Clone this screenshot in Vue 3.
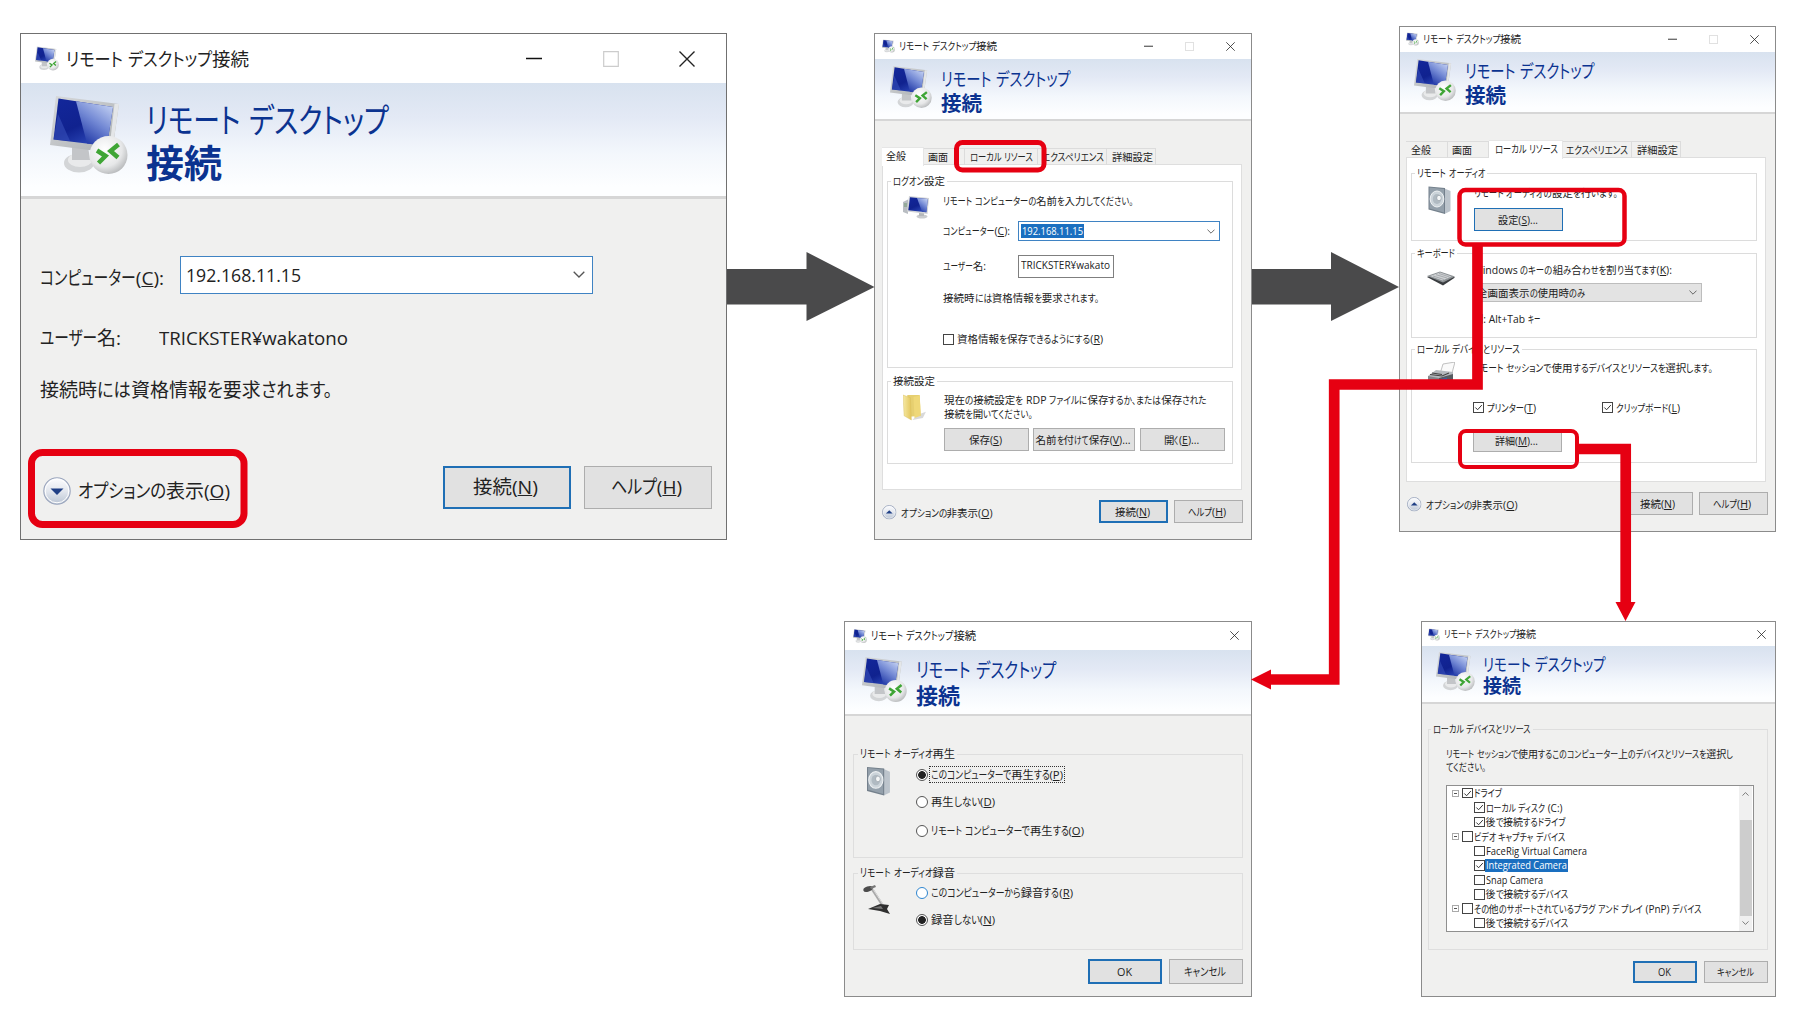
<script setup>
import { h, onMounted, ref } from 'vue'

// Label squeezed to a fixed width: kana runs are narrowed first, as in a UI font with condensed kana.
// An underscore marks the access key that follows it.
const Fit = {
  props: { t: String, w: Number },
  setup(props) {
    const root = ref(null)
    onMounted(() => {
      const runs = [...root.value.children].map((run) => ({
        run,
        inner: run.firstElementChild,
        kana: run.classList.contains('kana'),
        width: run.firstElementChild.getBoundingClientRect().width
      }))
      const kana = runs.filter((r) => r.kana).reduce((a, r) => a + r.width, 0)
      const rest = runs.filter((r) => !r.kana).reduce((a, r) => a + r.width, 0)
      let k = kana ? (props.w - rest) / kana : 1
      let o = 1
      if (!kana || k < 0.62 || k > 1.12) {
        k = Math.min(1.12, Math.max(0.62, k))
        o = props.w / (kana * k + rest)
        k *= o
      }
      runs.forEach((r) => {
        const s = r.kana ? k : o
        r.run.style.width = r.width * s + 'px'
        r.inner.style.transform = `scaleX(${s})`
      })
    })
    return () => {
      const parts = props.t.match(/[\u3001\u3002\u3041-\u30ff]+|[^\u3001\u3002\u3041-\u30ff]+/g) || []
      return h('span', { class: 'fit', ref: root, style: { width: props.w + 'px' } },
        parts.map((p) => {
          const isKana = /[\u3001\u3002\u3041-\u30ff]/.test(p)
          const i = p.indexOf('_')
          const kids = i < 0 ? p : [p.slice(0, i), h('u', p[i + 1]), p.slice(i + 2)]
          return h('span', { class: ['run', { kana: isKana }] }, [h('span', { class: 'glyphs' }, kids)])
        }))
    }
  }
}

const wins = [
  { id: 'main', title: 183, head: 243, sub: 76, full: true },
  { id: 'general', title: 98, head: 130, sub: 41, full: true, tall: true },
  { id: 'local', title: 98, head: 130, sub: 41, full: true, tall: true },
  { id: 'audio', title: 105, head: 140, sub: 44 },
  { id: 'devices', title: 92, head: 123, sub: 38 }
]

const tabs = [
  { t: '全般', w: 20 },
  { t: '画面', w: 20 },
  { t: 'ローカル リソース', w: 63 },
  { t: 'エクスペリエンス', w: 62 },
  { t: '詳細設定', w: 41 }
]

const tree = [
  { t: 'ドライブ', w: 28, on: true },
  { t: 'ローカル ディスク (C:)', w: 77, on: true, sub: true },
  { t: '後で接続するドライブ', w: 80, on: true, sub: true },
  { t: 'ビデオ キャプチャ デバイス', w: 92 },
  { t: 'FaceRig Virtual Camera', w: 101, sub: true },
  { t: 'Integrated Camera', w: 81, on: true, sub: true, sel: true },
  { t: 'Snap Camera', w: 57, sub: true },
  { t: '後で接続するデバイス', w: 83, sub: true },
  { t: 'その他のサポートされているプラグ アンド プレイ (PnP) デバイス', w: 228 },
  { t: '後で接続するデバイス', w: 83, sub: true }
]
</script>

<template>
  <main class="canvas">
    <svg class="defs" width="0" height="0">
      <defs>
        <linearGradient id="gScreen" x1="0" y1="0" x2="0.6" y2="1">
          <stop offset="0" stop-color="#13279b" /><stop offset="0.6" stop-color="#10228f" /><stop offset="1" stop-color="#2c48b8" />
        </linearGradient>
        <linearGradient id="gShine" x1="0.9" y1="0" x2="0.3" y2="1">
          <stop offset="0" stop-color="#c9d6f5" /><stop offset="0.5" stop-color="#7288d4" /><stop offset="1" stop-color="#1c34a4" />
        </linearGradient>
        <linearGradient id="gFrame" x1="0" y1="0" x2="1" y2="1">
          <stop offset="0" stop-color="#d8dadc" /><stop offset="1" stop-color="#a9adb0" />
        </linearGradient>
        <radialGradient id="gBall" cx="0.4" cy="0.35" r="0.7">
          <stop offset="0" stop-color="#fff" /><stop offset="0.65" stop-color="#e6e7e8" /><stop offset="1" stop-color="#b4b6b8" />
        </radialGradient>
        <linearGradient id="gDisc" x1="0" y1="0" x2="0" y2="1">
          <stop offset="0" stop-color="#fdfdff" /><stop offset="0.5" stop-color="#e3e7ee" /><stop offset="1" stop-color="#b9c4d3" />
        </linearGradient>
        <linearGradient id="gFolder" x1="0" y1="0" x2="1" y2="0">
          <stop offset="0" stop-color="#f6e9a4" /><stop offset="1" stop-color="#e3c65c" />
        </linearGradient>
      </defs>
      <symbol id="rdp" viewBox="0 0 78 78">
        <ellipse cx="29" cy="67" rx="15" ry="9.5" fill="#d3d5d7" />
        <ellipse cx="30" cy="64" rx="12" ry="7" fill="#e9eaeb" />
        <path d="M22 50h16l2 14H22z" fill="#c3c5c8" />
        <path d="M6 0 69 8 62 57 0 49z" fill="url(#gFrame)" />
        <path d="M64.500 8 69 8 62 57 59 56z" fill="#e4e6e8" />
        <path d="M8.500 2.500 63 11 57 50 3.500 43.500z" fill="url(#gScreen)" />
        <path d="M26 5.300 63 11 57 50 37 47.600z" fill="url(#gShine)" />
        <path d="M8 18 20 45 3.500 43.500z" fill="#3a54bd" opacity="0.55" />
        <circle cx="58.500" cy="59" r="19" fill="url(#gBall)" />
        <path d="M47 54.500 55.500 60 48.500 67M68.500 48.500 60.500 55 68 61.500" fill="none" stroke="#3fa535" stroke-width="4.500" />
      </symbol>
      <symbol id="pc" viewBox="0 0 26 23">
        <path d="M0 6 5 3.500V18L0 16z" fill="#b9bdc2" /><path d="M1 8h3M1 10h3" stroke="#5d8f5d" stroke-width="0.800" />
        <ellipse cx="19" cy="20.500" rx="5.500" ry="2" fill="#c9cbce" /><path d="M16 16h5v4h-5z" fill="#b5b8bb" />
        <path d="M6 0 26 2 24.500 18 4 15.500z" fill="#d2d4d6" />
        <path d="M7 1.200 24.800 3 23.400 16.300 5.300 14.300z" fill="url(#gScreen)" />
        <path d="M14 2 24.800 3 23.400 16.300 19 15.800z" fill="url(#gShine)" />
      </symbol>
      <symbol id="speaker" viewBox="0 0 24 28">
        <path d="M15 2 22 5V25L16 28z" fill="#bcc4cc" />
        <path d="M0 0.500 16.500 2V28L0 23.500z" fill="#74808c" />
        <path d="M1 1.500 15.500 3V26.500L1 22.500z" fill="#94a0ab" />
        <ellipse cx="8.500" cy="13" rx="6.800" ry="8" fill="#ccd4da" stroke="#eef1f3" />
        <ellipse cx="8.500" cy="13" rx="4.200" ry="5" fill="#b0bac2" /><ellipse cx="10.500" cy="12" rx="2.300" ry="2.700" fill="#f4f6f7" stroke="#7b858e" stroke-width="0.500" />
      </symbol>
      <symbol id="keyboard" viewBox="0 0 28 15">
        <path d="M0 6 13 1 28 6.500 16 14.500z" fill="#3a3d40" /><path d="M0 5 13 0.500 28 5.500 16 11.500z" fill="#8f9497" />
        <path d="M3 5 13 1.500 24.500 5.500 15.500 9.500z" fill="#cfd2d4" /><path d="M6 5 17 8.500M9 3.700 20 7M12 2.500 22.500 6" stroke="#8b8f93" stroke-width="0.600" />
      </symbol>
      <symbol id="printer" viewBox="0 0 28 26">
        <path d="M16 2 28 0 25 11 13 12z" fill="#fafafa" stroke="#999" stroke-width="0.600" />
        <path d="M1 14 9 8 26 10V21L12 24 1 20z" fill="#b5babe" /><path d="M1 14 12 16V24L1 20z" fill="#82878c" />
        <path d="M12 16 26 12V21L12 24z" fill="#565b61" /><path d="M14 17 20 15.500V18L14 19.500z" fill="#3f5f9e" /><path d="M3 12.500 15 14 22 11M5 11 15 12.500" stroke="#444" stroke-width="1.100" fill="none" />
      </symbol>
      <symbol id="folder" viewBox="0 0 22 26">
        <path d="M14 20 22 17 19 23 9 25z" fill="#c9c9c9" opacity="0.7" />
        <path d="M4 1 16 1 17 21 6 22z" fill="#e6cf70" /><path d="M10 3 16 1.500 17 21 11 23z" fill="#efd878" />
        <path d="M0 1 7 3.500 8 25 1 21z" fill="url(#gFolder)" stroke="#d6bb58" stroke-width="0.400" />
      </symbol>
      <symbol id="mic" viewBox="0 0 28 29">
        <path d="M9 4 20 21" stroke="#a9a9a9" stroke-width="2.400" /><path d="M10 4 21 21" stroke="#dcdcdc" stroke-width="1" />
        <ellipse cx="5" cy="4" rx="4.800" ry="2.600" fill="#4c4c4c" transform="rotate(-20 5 4)" /><path d="M7 2 12 0 13 2 8 4z" fill="#777" />
        <path d="M5 24 17 19 26 20 24 24 27 29 17 26z" fill="#2f2f2f" /><path d="M9 23 18 21 20 24z" fill="#777" />
      </symbol>
      <symbol id="down" viewBox="0 0 28 28">
        <circle cx="14" cy="14" r="13.200" fill="url(#gDisc)" stroke="#9aa5bd" stroke-width="1.100" /><circle cx="14" cy="14" r="11.800" fill="none" stroke="#fff" />
        <path d="M7.500 11.500h13L14 18z" fill="#1f3f85" />
      </symbol>
      <symbol id="up" viewBox="0 0 28 28">
        <circle cx="14" cy="14" r="13" fill="url(#gDisc)" stroke="#8f9bb5" stroke-width="1.600" /><circle cx="14" cy="14" r="11.500" fill="none" stroke="#fff" />
        <path d="M7.500 16.500h13L14 10z" fill="#1f3f85" />
      </symbol>
      <symbol id="chev" viewBox="0 0 12 7"><path d="M0.700 0.700 6 6 11.300 0.700" fill="none" stroke="#555" stroke-width="1.300" /></symbol>
      <symbol id="tick" viewBox="0 0 10 10"><path d="M1.500 5 4 7.500 8.700 2.300" fill="none" stroke="#333" stroke-width="1.100" /></symbol>
    </svg>

    <section v-for="win in wins" :key="win.id" class="win" :class="[win.id, { tall: win.tall }]">
      <header class="bar">
        <svg class="bar-icon"><use href="#rdp" /></svg>
        <Fit t="リモート デスクトップ接続" :w="win.title" />
        <div class="caption">
          <svg v-if="win.full" viewBox="0 0 16 16"><path d="M0 7.500h16" stroke="#111" stroke-width="1.500" /></svg>
          <svg v-if="win.full" viewBox="0 0 16 16"><path d="M.7.700h14.600v14.600H.7z" fill="none" stroke="#ccc" stroke-width="1.200" /></svg>
          <svg viewBox="0 0 16 16"><path d="M.5.500l15 15M15.500.500l-15 15" fill="none" stroke="#222" stroke-width="1.400" /></svg>
        </div>
      </header>
      <div class="banner">
        <svg class="logo"><use href="#rdp" /></svg>
        <div class="heading">
          <div class="h1"><Fit t="リモート デスクトップ" :w="win.head" /></div>
          <div class="h2"><Fit t="接続" :w="win.sub" /></div>
        </div>
      </div>

      <template v-if="win.id === 'main'">
        <div class="row m-host">
          <Fit t="コンピューター(_C):" :w="124" />
          <div class="combo"><Fit t="192.168.11.15" :w="115" /><svg class="chev"><use href="#chev" /></svg></div>
        </div>
        <div class="row m-user"><Fit t="ユーザー名:" :w="81" /><Fit t="TRICKSTER¥wakatono" :w="189" /></div>
        <div class="row m-note"><Fit t="接続時には資格情報を要求されます。" :w="292" /></div>
        <footer class="foot">
          <svg class="disc"><use href="#down" /></svg><Fit class="opt" t="オプションの表示(_O)" :w="152" />
          <div class="btn primary"><Fit t="接続(_N)" :w="65" /></div>
          <div class="btn"><Fit t="ヘルプ(_H)" :w="71" /></div>
        </footer>
      </template>

      <template v-if="win.tall">
        <nav class="tabs">
          <div v-for="(tab, i) in tabs" :key="tab.t" class="tab" :class="['t' + i, { active: i === (win.id === 'general' ? 0 : 2) }]">
            <Fit :t="tab.t" :w="tab.w" />
          </div>
        </nav>
        <div v-if="win.id === 'general'" class="panel">
          <div class="group g-logon">
            <div class="legend"><Fit t="ログオン設定" :w="52" /></div>
            <div class="cols">
              <svg class="pic pc"><use href="#pc" /></svg>
              <div class="content">
                <div class="row r26"><Fit t="リモート コンピューターの名前を入力してください。" :w="190" /></div>
                <div class="row r34"><Fit class="lab" t="コンピューター(_C):" :w="67" />
                  <div class="combo"><span class="marked"><Fit t="192.168.11.15" :w="61" /></span><svg class="chev"><use href="#chev" /></svg></div>
                </div>
                <div class="row r36"><Fit class="lab" t="ユーザー名:" :w="43" /><div class="userbox"><Fit t="TRICKSTER¥wakato" :w="89" /></div></div>
                <div class="row r28"><Fit t="接続時には資格情報を要求されます。" :w="156" /></div>
                <div class="row r54"><span class="check"></span><Fit t="資格情報を保存できるようにする(_R)" :w="146" /></div>
              </div>
            </div>
          </div>
          <div class="group g-conn">
            <div class="legend"><Fit t="接続設定" :w="42" /></div>
            <div class="cols">
              <svg class="pic folder"><use href="#folder" /></svg>
              <div class="content">
                <div class="row r14 first"><Fit t="現在の接続設定を RDP ファイルに保存するか、または保存された" :w="263" /></div>
                <div class="row r14"><Fit t="接続を開いてください。" :w="89" /></div>
                <div class="row btns">
                  <div class="btn b1"><Fit t="保存(_S)" :w="33" /></div>
                  <div class="btn b2"><Fit t="名前を付けて保存(_V)..." :w="95" /></div>
                  <div class="btn b3"><Fit t="開く(_E)..." :w="35" /></div>
                </div>
              </div>
            </div>
          </div>
        </div>
        <div v-else class="panel">
          <div class="group g-audio">
            <div class="legend"><Fit t="リモート オーディオ" :w="68" /></div>
            <div class="cols">
              <svg class="pic speaker"><use href="#speaker" /></svg>
              <div class="content">
                <div class="row r26"><Fit t="リモート オーディオの設定を行います。" :w="144" /></div>
                <div class="btn focus set"><Fit t="設定(_S)..." :w="40" /></div>
              </div>
            </div>
          </div>
          <div class="group g-keys">
            <div class="legend"><Fit t="キーボード" :w="38" /></div>
            <div class="cols">
              <svg class="pic keyboard"><use href="#keyboard" /></svg>
              <div class="content">
                <div class="row k1"><Fit t="Windows のキーの組み合わせを割り当てます(_K):" :w="199" /></div>
                <div class="select"><Fit t="全画面表示の使用時のみ" :w="108" /><svg class="chev"><use href="#chev" /></svg></div>
                <div class="row k3"><Fit t="例: Alt+Tab キー" :w="67" /></div>
              </div>
            </div>
          </div>
          <div class="group g-dev">
            <div class="legend"><Fit t="ローカル デバイスとリソース" :w="103" /></div>
            <div class="cols">
              <svg class="pic printer"><use href="#printer" /></svg>
              <div class="content">
                <div class="row d1"><Fit t="リモート セッションで使用するデバイスとリソースを選択します。" :w="240" /></div>
                <div class="row d2">
                  <span class="check"><svg><use href="#tick" /></svg></span><Fit t="プリンター(_T)" :w="49" />
                  <span class="check second"><svg><use href="#tick" /></svg></span><Fit t="クリップボード(_L)" :w="64" />
                </div>
                <div class="btn more"><Fit t="詳細(_M)..." :w="43" /></div>
              </div>
            </div>
          </div>
        </div>
        <footer class="foot">
          <svg class="disc"><use href="#up" /></svg><Fit class="opt" t="オプションの非表示(_O)" :w="92" />
          <div class="btn" :class="{ primary: win.id === 'general' }"><Fit t="接続(_N)" :w="35" /></div>
          <div class="btn"><Fit t="ヘルプ(_H)" :w="38" /></div>
        </footer>
      </template>

      <template v-if="win.id === 'audio'">
        <div class="group g-play">
          <div class="legend"><Fit t="リモート オーディオ再生" :w="95" /></div>
          <div class="cols">
            <svg class="pic speaker"><use href="#speaker" /></svg>
            <div class="content">
              <div class="row p1"><span class="radio on"></span><span class="dotted"><Fit t="このコンピューターで再生する(_P)" :w="132" /></span></div>
              <div class="row p2"><span class="radio"></span><Fit t="再生しない(_D)" :w="64" /></div>
              <div class="row p2"><span class="radio"></span><Fit t="リモート コンピューターで再生する(_O)" :w="153" /></div>
            </div>
          </div>
        </div>
        <div class="group g-rec">
          <div class="legend"><Fit t="リモート オーディオ録音" :w="95" /></div>
          <div class="cols">
            <svg class="pic mic"><use href="#mic" /></svg>
            <div class="content">
              <div class="row q1"><span class="radio hot"></span><Fit t="このコンピューターから録音する(_R)" :w="142" /></div>
              <div class="row p2"><span class="radio on"></span><Fit t="録音しない(_N)" :w="64" /></div>
            </div>
          </div>
        </div>
        <footer class="foot">
          <div class="btn primary"><Fit t="OK" :w="15" /></div>
          <div class="btn"><Fit t="キャンセル" :w="42" /></div>
        </footer>
      </template>

      <template v-if="win.id === 'devices'">
        <div class="group g-list">
          <div class="legend"><Fit t="ローカル デバイスとリソース" :w="98" /></div>
          <div class="row l1"><Fit t="リモート セッションで使用するこのコンピューター上のデバイスとリソースを選択し" :w="287" /></div>
          <div class="row l2"><Fit t="てください。" :w="40" /></div>
          <div class="list">
            <div class="tree">
              <div v-for="(n, i) in tree" :key="i" class="node" :class="{ sub: n.sub }">
                <span v-if="!n.sub" class="fold"></span>
                <span class="check"><svg v-if="n.on"><use href="#tick" /></svg></span>
                <span class="name" :class="{ sel: n.sel }"><Fit :t="n.t" :w="n.w" /></span>
              </div>
            </div>
            <div class="scroll">
              <svg class="chev flip"><use href="#chev" /></svg>
              <span class="thumb"></span>
              <svg class="chev"><use href="#chev" /></svg>
            </div>
          </div>
        </div>
        <footer class="foot">
          <div class="btn primary"><Fit t="OK" :w="13" /></div>
          <div class="btn"><Fit t="キャンセル" :w="37" /></div>
        </footer>
      </template>
    </section>

    <svg class="notes" viewBox="0 0 1800 1024">
      <g fill="#4a4a4b">
        <path d="M727 269h79.500v-17L874.500 287 806.500 321v-16.500H727z" />
        <path d="M1252 269h79v-17L1399 287 1331 321v-16.500h-79z" />
      </g>
      <g fill="none" stroke="#e60012">
        <rect x="31.500" y="452.500" width="212.500" height="72" rx="11" stroke-width="7" />
        <rect x="956.500" y="142.500" width="87.500" height="27.500" rx="6" stroke-width="5" />
        <rect x="1459.500" y="190" width="165" height="54.500" rx="6" stroke-width="4.500" />
        <rect x="1460" y="431" width="117" height="36" rx="6" stroke-width="4" />
        <path d="M1477.500 246V384.500H1334.200V679.500H1269" stroke-width="10.700" />
        <path d="M1578 449H1625.700V604" stroke-width="10.700" />
      </g>
      <path d="M1251 679.500 1271 669.500V689.500zM1625.500 621 1615.500 602H1635.500z" fill="#e60012" />
    </svg>
  </main>
</template>

<style>
body { background: #fff; }
.fit { display: inline-flex; flex: none; white-space: pre; line-height: inherit; }
.fit .run { display: block; flex: none; overflow: visible; }
.fit .glyphs { display: inline-block; transform-origin: 0 50%; white-space: pre; }
.fit .kana { font-feature-settings: "palt"; }
.fit u { text-underline-offset: 1px; text-decoration-thickness: 1px; text-decoration-skip-ink: none; }
</style>

<style scoped>
.canvas { position: relative; width: 1800px; height: 1024px; overflow: hidden; background: #fff; font-family: "Open Sans", "Noto Sans CJK JP", sans-serif; color: #222; }
.canvas * { box-sizing: border-box; }
.defs { position: absolute; }
.notes { position: absolute; left: 0; top: 0; width: 1800px; height: 1024px; }
.win { position: absolute; display: flex; flex-direction: column; background: #f0f0ef; border: 1px solid #8b8b8b; font-size: 10.500px; line-height: 14px; }
.main { left: 20px; top: 33px; width: 707px; height: 507px; border-color: #707070; font-size: 19px; line-height: 24px; }
.general { left: 874px; top: 33px; width: 378px; height: 507px; }
.local { left: 1399px; top: 26px; width: 377px; height: 506px; }
.audio { left: 844px; top: 621px; width: 408px; height: 376px; font-size: 11.300px; }
.devices { left: 1421px; top: 621px; width: 355px; height: 376px; font-size: 10px; }

.bar { display: flex; align-items: center; flex: none; background: #fff; }
.bar-icon { flex: none; }
.caption { display: flex; margin-left: auto; }
.main .bar { height: 49px; padding: 0 31px 0 14px; font-size: 18.500px; }
.main .bar-icon { width: 24px; height: 25px; margin-right: 7px; }
.main .caption { gap: 60.500px; }
.main .caption svg { width: 16px; height: 16px; }
.tall .bar { height: 25px; padding: 0 16px 1px 6px; }
.general .bar { padding-left: 7px; }
.tall .bar-icon { width: 13px; height: 14px; margin-right: 4px; }
.caption { gap: 32px; }
.caption svg { width: 9px; height: 9px; }
.audio .bar { height: 28px; padding: 0 12px 1px 8px; }
.audio .bar-icon { width: 14px; height: 14px; margin-right: 4px; }
.devices .bar { height: 24px; padding: 0 9px 0 6px; }
.devices .bar-icon { width: 12px; height: 13px; margin-right: 4px; }

.banner { display: flex; flex: none; align-items: flex-start; background: linear-gradient(#d8e2ef, #e3e9f5 30%, #f3f7fc 62%, #fdfeff 92%); border-bottom: 2px solid #d6d6d6; color: #0b3390; }
.logo { flex: none; }
.h2 { font-weight: 700; }
.main .banner { height: 116px; border-bottom-width: 3px; }
.main .logo { width: 78px; height: 78px; margin: 13px 18px 0 29px; }
.main .h1 { font-size: 34px; line-height: 40px; margin-top: 17px; }
.main .h2 { font-size: 38px; line-height: 40px; margin-top: 2px; }
.tall .banner { height: 62px; }
.tall .logo { width: 42px; height: 42px; margin: 7px 9px 0 14px; }
.general .logo { margin-left: 15px; }
.tall .h1 { font-size: 18.500px; line-height: 22px; margin-top: 8px; }
.tall .h2 { font-size: 20.500px; line-height: 22px; margin-top: 2px; }
.general .h1 { margin-top: 9px; }
.audio .banner { height: 66px; }
.audio .logo { width: 45px; height: 45px; margin: 7px 9px 0 17px; }
.audio .h1 { font-size: 20px; line-height: 24px; margin-top: 9px; }
.audio .h2 { font-size: 22px; line-height: 24px; margin-top: 0; }
.devices .banner { height: 58px; }
.devices .logo { width: 39px; height: 39px; margin: 6px 8px 0 14px; }
.devices .h1 { font-size: 17.500px; line-height: 20px; margin-top: 8px; }
.devices .h2 { font-size: 19px; line-height: 20px; margin-top: 2px; }

.row { display: flex; align-items: center; flex: none; }
.combo { display: flex; align-items: center; background: #fff; border: 1px solid #3f83c3; }
.chev { flex: none; width: 8px; height: 5px; margin-left: auto; }
.btn { display: flex; align-items: center; justify-content: center; flex: none; padding-right: 2px; background: #e1e1e1; border: 1px solid #adadad; }
.btn.primary { border: 2px solid #1f6fb5; }
.btn.focus { border: 1px solid #1f6fb5; }
.foot { display: flex; align-items: center; flex: none; }
.disc { flex: none; }

.m-host { height: 38px; margin-top: 57px; padding-left: 19px; }
.m-host > .fit { margin-top: 5px; }
.main .combo { width: 413px; height: 38px; margin-left: 16px; padding: 0 7px 1px 5px; }
.main .chev { width: 12px; height: 7px; }
.m-user { height: 24px; margin-top: 32px; padding-left: 19px; gap: 38px; }
.m-note { height: 24px; margin-top: 28px; padding-left: 19px; }
.main .foot { height: 43px; margin-top: 64px; padding-left: 22px; }
.main .disc { width: 28px; height: 28px; margin: 6px 7px 0 0; }
.main .opt { margin: 6px 213px 0 0; }
.main .btn { width: 128px; height: 43px; margin-right: 13px; padding: 0 3px 2px 0; }

.tabs { display: flex; align-items: flex-end; height: 18px; margin: 26px 0 0 6px; }
.general .tabs { margin-left: 7px; }
.tab { height: 17px; padding-left: 4px; border: 1px solid #dcdcdc; border-width: 1px 1px 0 0; line-height: 16px; position: relative; }
.tab.active { height: 19px; margin-bottom: -1px; background: #fff; border-color: #e6e6e6; z-index: 1; }
.t0 { width: 42px; padding-left: 5px; }
.t1 { width: 41px; }
.t2 { width: 73px; padding-left: 5px; }
.t3 { width: 69px; }
.t4 { width: 49px; padding-left: 5px; }
.general .t0 { padding-left: 4px; }
.local .t2 { width: 74px; padding-left: 6px; }
.local .t3 { padding-left: 3px; }
.panel { height: 325px; margin: -1px 9px 0 6px; padding: 16px 8px 0 4px; background: #fff; border: 1px solid #dedede; flex: none; }
.general .panel { height: 326px; margin-left: 7px; }
.group { border: 1px solid #dcdcdc; }
.legend { width: max-content; margin: -8px 0 0 3px; padding: 0 2px; height: 14px; background: #fff; }
.cols { display: flex; align-items: flex-start; }
.pic { flex: none; }
.check { flex: none; width: 11px; height: 11px; border: 1px solid #444; background: #fff; margin-right: 3px; }
.check svg { display: block; width: 9px; height: 9px; }

.g-logon { height: 187px; }
.pc { width: 26px; height: 23px; margin: 8px 14px 0 15px; }
.r26 { height: 26px; }
.r34 { height: 34px; }
.r36 { height: 36px; }
.r28 { height: 28px; }
.r54 { height: 54px; }
.general .combo { width: 202px; height: 20px; margin-left: 8px; padding: 0 4px 0 2px; }
.marked { display: flex; height: 14px; padding: 0 1px; background: #1a6fc0; color: #fff; font-size: 11px; }
.userbox { width: 96px; height: 23px; margin-left: 32px; padding: 2px 0 0 2px; border: 1px solid #7f7f7f; font-size: 11.500px; }
.g-conn { height: 83px; margin-top: 13px; }
.folder { width: 23px; height: 27px; margin: 6px 17px 0 15px; }
.g-conn .content { margin-left: 1px; }
.r14 { height: 14px; }
.r14.first { margin-top: 5px; }
.btns { margin-top: 7px; }
.btns .btn { height: 23px; }
.b1 { width: 85px; margin-right: 4px; }
.b2 { width: 102px; margin-right: 5px; }
.b3 { width: 85px; }

.tall .foot { height: 23px; margin-top: 10px; padding-left: 7px; }
.general .foot { padding-left: 7px; }
.tall .disc { width: 14.500px; height: 14.500px; margin: 2px 4px 0 0; }
.tall .opt { margin: 3px 0 0; }
.tall .foot .btn { width: 69px; height: 23px; }
.tall .foot .opt + .btn { margin: 0 6px 0 106px; }

.g-audio { height: 68px; margin-top: -1px; }
.g-audio .speaker { width: 25px; height: 28px; margin: 6px 21px 0 16px; }
.g-audio .r26 { height: 26px; }
.set { width: 89px; height: 23px; margin-top: 2px; }
.g-keys { height: 85px; margin-top: 12px; }
.keyboard { width: 28px; height: 15px; margin: 11px 18px 0 15px; }
.k1 { height: 20px; }
.select { display: flex; align-items: center; width: 229px; height: 19px; margin-top: 3px; padding: 0 4px 0 3px; background: #e3e3e3; border: 1px solid #bdbdbd; }
.k3 { height: 34px; }
.g-dev { height: 114px; margin-top: 11px; }
.printer { width: 28px; height: 26px; margin: 6px 18px 0 15px; }
.d1 { height: 24px; }
.d2 { height: 55px; }
.d2 .second { margin-left: 66px; }
.more { width: 89px; height: 23px; margin-top: -6px; }

.audio .legend { background: #f0f0ef; margin-left: 4px; }
.audio .group, .devices .group { border-color: #dedede; }
.g-play { height: 104px; margin: 38px 8px 0 8px; }
.g-play .speaker { width: 25px; height: 30px; margin: 5px 24px 0 13px; }
.g-rec { height: 77px; margin: 15px 8px 0 8px; }
.mic { width: 28px; height: 29px; margin: 5px 25px 0 9px; }
.radio { flex: none; width: 12px; height: 12px; margin-right: 3px; border: 1px solid #555; border-radius: 50%; background: #fff; }
.radio.on { background: radial-gradient(circle, #222 0 3.500px, #fff 4.200px); }
.radio.hot { border-color: #2f86d0; }
.dotted { display: flex; height: 17px; line-height: 15px; margin-left: -2px; padding: 0 1px; border: 1px dotted #333; }
.p1 { height: 27px; }
.q1 { height: 26px; }
.p2 { height: 28.500px; }
.audio .foot { justify-content: flex-end; gap: 7px; margin: 9px 8px 0 0; }
.audio .foot .btn { width: 74px; height: 25px; }

.g-list { height: 221px; margin: 25px 7px 0 6px; }
.devices .legend { background: #f0f0ef; margin-left: 2px; }
.l1 { height: 13px; margin-top: 11px; padding-left: 17px; }
.l2 { height: 13px; padding-left: 17px; }
.list { display: flex; justify-content: space-between; width: 308px; height: 147px; margin: 12px 0 0 17px; padding: 0 1px 0 0; background: #fff; border: 1px solid #8f8f8f; }
.node { display: flex; align-items: center; height: 14.450px; padding-left: 5px; }
.node.sub { padding-left: 27px; }
.fold { flex: none; width: 7px; height: 7px; margin-right: 3px; border: 1px solid #aaa; background: linear-gradient(#555, #555) center / 3px 1px no-repeat #fff; }
.node .check { width: 10.500px; height: 10.500px; margin-right: 0; }
.name { display: flex; padding: 0 1px; }
.name.sel { background: #1a6fc0; color: #fff; height: 13px; line-height: 13px; }
.scroll { display: flex; flex-direction: column; align-items: center; width: 13px; height: 145px; padding: 6px 0; background: #f0f0f0; }
.scroll .chev { width: 7px; height: 4px; margin: 0; }
.flip { transform: rotate(180deg); }
.thumb { width: 12px; height: 97px; margin: 24px 0 5px; background: #cdcdcd; }
.devices .foot { justify-content: flex-end; gap: 7px; margin: 11px 7px 0 0; }
.devices .foot .btn { width: 64px; height: 22px; }
</style>
